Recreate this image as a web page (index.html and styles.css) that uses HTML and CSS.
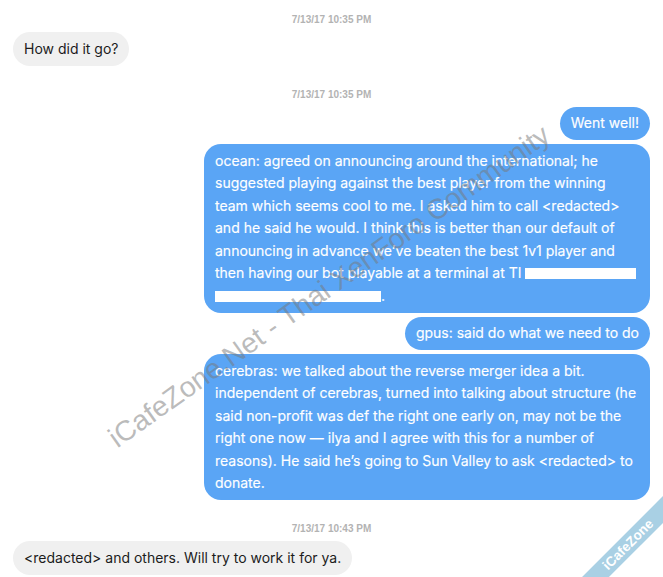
FILE: index.html
```html
<!DOCTYPE html>
<html>

<head>
    <title>Messages</title>
    <link rel="stylesheet" href="styles.css">
</head>

<body>
    <div id="chat">
        <div class="stamp">7/13/17 10:35 PM</div>
        <div class="row in">
            <div class="bubble">How did it go?</div>
        </div>

        <div class="stamp">7/13/17 10:35 PM</div>
        <div class="row out">
            <div class="bubble">Went well!</div>
        </div>
        <div class="row out">
            <div class="bubble">ocean: agreed on announcing around the international; he suggested playing against the best player from the winning team which seems cool to me. I asked him to call &lt;redacted&gt; and he said he would. I think this is better than our default of announcing in advance we’ve beaten the best 1v1 player and then having our bot playable at a terminal at TI <span class="redact r1"></span> <span class="redact r2"></span>.</div>
        </div>
        <div class="row out">
            <div class="bubble">gpus: said do what we need to do</div>
        </div>
        <div class="row out">
            <div class="bubble">cerebras: we talked about the reverse merger idea a bit. independent of cerebras, turned into talking about structure (he said non-profit was def the right one early on, may not be the right one now — ilya and I agree with this for a number of reasons). He said he’s going to Sun Valley to ask &lt;redacted&gt; to donate.</div>
        </div>

        <div class="stamp">7/13/17 10:43 PM</div>
        <div class="row in">
            <div class="bubble">&lt;redacted&gt; and others. Will try to work it for ya.</div>
        </div>
    </div>

    <div id="watermark">iCafeZone.Net - Thai XenForo Community</div>
    <div id="corner">
        <div id="ribbon">iCafeZone</div>
    </div>
</body>

</html>
```

FILE: styles.css
```css
body {
    margin: 0;
    overflow: hidden;
    background: #fff;
    font-family: Inter, "Liberation Sans", sans-serif;
}

#chat {
    padding: 0 13px;
    display: flex;
    flex-direction: column;
}

.stamp {
    text-align: center;
    font-family: "Liberation Sans", Arial, sans-serif;
    font-size: 10px;
    line-height: 12px;
    font-weight: bold;
    color: #b3b3b3;
    margin-top: 19px;
    margin-bottom: 6px;
}

.stamp:first-child {
    margin-top: 14px;
}

.row {
    display: flex;
    margin-bottom: 4px;
}

.row.in {
    justify-content: flex-start;
}

.row.out {
    justify-content: flex-end;
}

.bubble {
    max-width: 424px;
    padding: 5.5px 11px;
    border-radius: 17px;
    font-size: 14px;
    line-height: 22.5px;
}

.in .bubble {
    background: #f0f0f0;
    color: #1c1c1c;
}

.out .bubble {
    background: #5aa5f5;
    color: #fff;
    -webkit-text-stroke: 0.15px #fff;
}

.redact {
    display: inline-block;
    height: 11px;
    background: #fff;
    vertical-align: -1px;
}

.r1 {
    width: 111px;
}

.r2 {
    width: 166px;
}

#watermark {
    position: absolute;
    left: 60px;
    top: 262px;
    width: 560px;
    transform: rotate(-35.4deg);
    font-family: "Liberation Sans", Arial, sans-serif;
    font-size: 28.5px;
    color: rgba(120, 120, 120, 0.5);
    white-space: nowrap;
    pointer-events: none;
}

/* corner badge */
#corner {
    position: absolute;
    right: 0;
    bottom: 0;
    width: 90px;
    height: 90px;
    overflow: hidden;
}

#ribbon {
    position: absolute;
    left: -20px;
    top: 48px;
    width: 150px;
    height: 19px;
    line-height: 19px;
    transform: rotate(-45deg);
    background: #a9d0e4;
    color: #fff;
    font-family: "Liberation Sans", Arial, sans-serif;
    font-size: 13.5px;
    font-weight: bold;
    text-align: center;
}
```
